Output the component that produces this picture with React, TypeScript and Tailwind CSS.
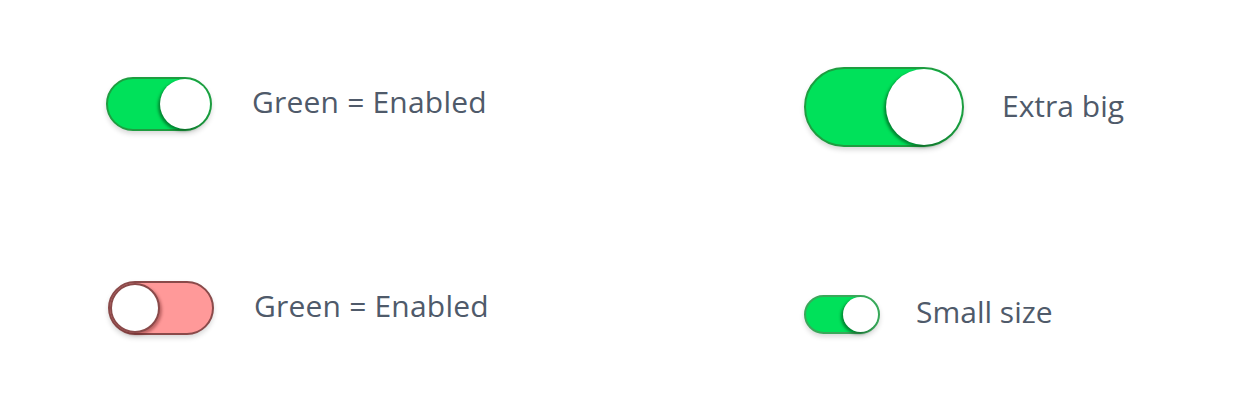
import React from "react";

function Toggle({
  w,
  h,
  on,
  track,
  border,
}: {
  w: number;
  h: number;
  on: boolean;
  track: string;
  border: string;
}) {
  const knob = h - 4;
  return (
    <div
      className="relative shrink-0 rounded-full border-2 shadow-[0_3px_5px_rgba(0,0,0,0.15)]"
      style={{ width: w, height: h, backgroundColor: track, borderColor: border }}
    >
      <div
        className={
          on
            ? "absolute top-0 right-0 rounded-full bg-white shadow-[-2px_2px_3px_rgba(0,70,20,0.6)]"
            : "absolute top-0 left-0 rounded-full bg-white border-2 border-[#8a4a4a] shadow-[2px_2px_3px_rgba(90,20,20,0.4)]"
        }
        style={{ width: knob, height: knob }}
      />
    </div>
  );
}

export default function App() {
  const label =
    "text-[30px] leading-none text-[#4f5a6a] font-['Open_Sans',sans-serif] whitespace-nowrap";
  return (
    <div className="w-[1235px] h-[400px] bg-white flex font-['Open_Sans',sans-serif]">
      <div className="w-[804px] pl-[106px] pt-[77px] flex flex-col">
        <div className="flex items-center h-[54px]">
          <Toggle w={106} h={54} on track="#00e15a" border="#1e9d40" />
          <span className={`${label} ml-[40px] -mt-[4px] tracking-[0.2px]`}>Green = Enabled</span>
        </div>
        <div className="flex items-center h-[54px] mt-[150px] pl-[2px]">
          <Toggle w={106} h={54} on={false} track="#ff9999" border="#8a4a4a" />
          <span className={`${label} ml-[40px] -mt-[4px] tracking-[0.2px]`}>Green = Enabled</span>
        </div>
      </div>
      <div className="pt-[67px] flex flex-col">
        <div className="flex items-center h-[80px]">
          <Toggle w={160} h={80} on track="#00e15a" border="#1e9d40" />
          <span className={`${label} ml-[38px] -mt-[2px]`}>Extra big</span>
        </div>
        <div className="flex items-center h-[39px] mt-[148px]">
          <Toggle w={76} h={39} on track="#00e15a" border="#3aa85a" />
          <span className={`${label} ml-[36px] -mt-[5px]`}>Small size</span>
        </div>
      </div>
    </div>
  );
}
